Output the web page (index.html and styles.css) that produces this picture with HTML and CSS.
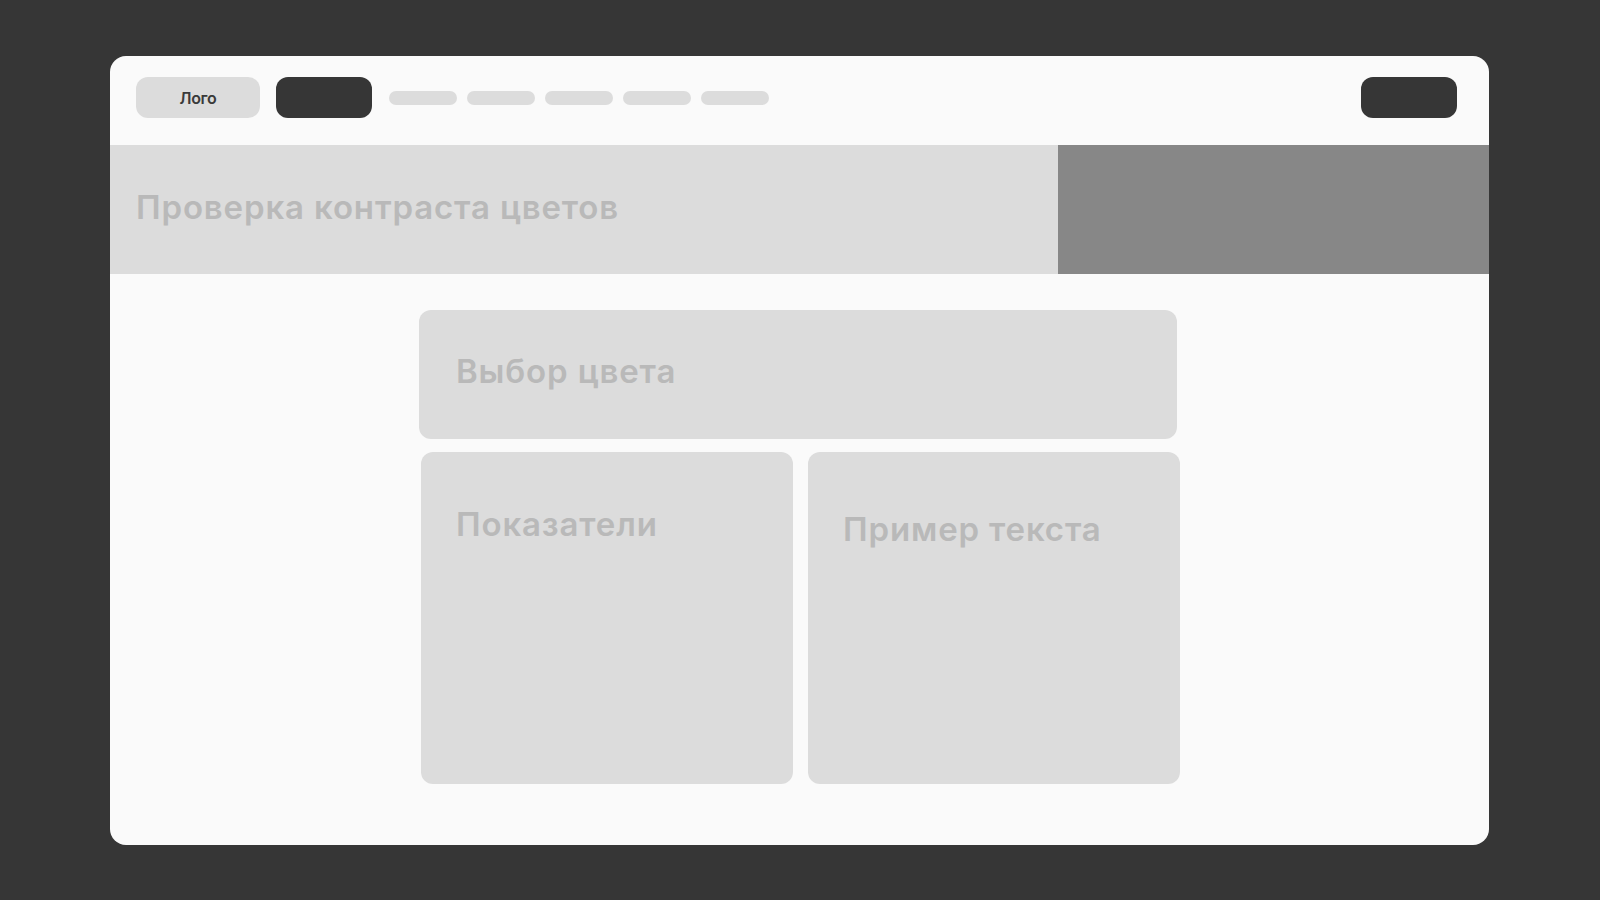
FILE: index.html
```html
<!DOCTYPE html>
<html lang="ru">
<head>
<meta charset="utf-8">
<title>Проверка контраста цветов</title>
<link rel="stylesheet" href="styles.css">
</head>
<body>
<div class="frame">
  <header class="nav">
    <div class="nav-left">
      <div class="logo">Лого</div>
      <div class="btn-dark"></div>
      <div class="links">
        <span class="link"></span>
        <span class="link"></span>
        <span class="link"></span>
        <span class="link"></span>
        <span class="link"></span>
      </div>
    </div>
    <div class="btn-dark"></div>
  </header>
  <section class="hero">
    <div class="hero-text"><h1>Проверка контраста цветов</h1></div>
    <div class="hero-side"></div>
  </section>
  <main class="content">
    <div class="card card-picker"><h2>Выбор цвета</h2></div>
    <div class="row">
      <div class="card card-stats"><h2>Показатели</h2></div>
      <div class="card card-sample"><h2>Пример текста</h2></div>
    </div>
  </main>
</div>
</body>
</html>
```
FILE: styles.css
```css
html, body {
  margin: 0;
  padding: 0;
}
body {
  background: #363636;
  width: 1600px;
  height: 900px;
  overflow: hidden;
  font-family: "Inter", "Liberation Sans", sans-serif;
}
.frame {
  box-sizing: border-box;
  width: 1379px;
  height: 789px;
  margin: 56px 0 0 110px;
  background: #fafafa;
  border-radius: 16px;
  overflow: hidden;
}
.nav {
  box-sizing: border-box;
  height: 89px;
  padding: 21px 32px 0 26px;
  display: flex;
  justify-content: space-between;
  align-items: flex-start;
}
.nav-left {
  display: flex;
  align-items: center;
}
.logo {
  width: 124px;
  height: 41px;
  border-radius: 12px;
  background: #dcdcdc;
  color: #3a3a3a;
  font-size: 16px;
  font-weight: 600;
  letter-spacing: -0.3px;
  display: flex;
  align-items: center;
  justify-content: center;
}
.btn-dark {
  width: 96px;
  height: 41px;
  border-radius: 12px;
  background: #363636;
}
.nav-left .btn-dark {
  margin-left: 16px;
}
.links {
  display: flex;
  gap: 10px;
  margin-left: 17px;
}
.link {
  width: 68px;
  height: 14px;
  border-radius: 7px;
  background: #dcdcdc;
}
.hero {
  display: flex;
  height: 129px;
}
.hero-text {
  flex: 0 0 948px;
  background: #dcdcdc;
  box-sizing: border-box;
  padding-left: 26px;
  display: flex;
  align-items: center;
}
.hero-side {
  flex: 1;
  background: #878787;
}
h1, h2 {
  margin: 0;
  color: #b9b9b9;
  font-family: "Inter", "Liberation Sans", sans-serif;
  font-size: 33px;
  font-weight: 600;
  letter-spacing: 0.85px;
  line-height: 40px;
}
h1 {
  margin-top: -6px;
}
.content {
  width: 761px;
  margin: 36px auto 0;
  display: flex;
  flex-direction: column;
  gap: 13px;
}
.card {
  background: #dcdcdc;
  border-radius: 12px;
  box-sizing: border-box;
}
.card-picker {
  width: 758px;
  height: 129px;
  padding: 41px 0 0 37px;
}
.row {
  display: flex;
  gap: 15px;
  padding-left: 2px;
}
.card-stats, .card-sample {
  width: 372px;
  height: 332px;
  padding-left: 35px;
}
.card-stats {
  padding-top: 52px;
}
.card-sample {
  padding-top: 57px;
}
```
